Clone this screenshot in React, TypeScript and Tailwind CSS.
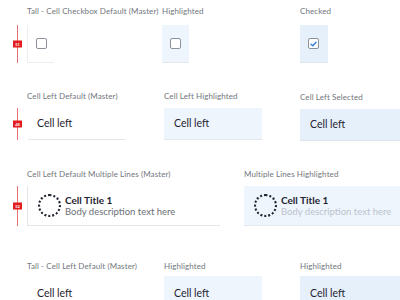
import React from 'react';

function Marker({ label }: { label: string }) {
  // red measurement guide on the left of master cells
  return (
    <div className="absolute left-[17px] top-0 bottom-0 w-px bg-[#e57373]">
      <div className="absolute left-[-4px] top-1/2 -translate-y-1/2 w-[9px] h-[7px] bg-[#e11d1d] text-white text-[4px] leading-[7px] text-center font-bold">
        {label}
      </div>
    </div>
  );
}

function Label({ children }: { children: React.ReactNode }) {
  return <div className="text-[8px] leading-[10px] tracking-[0.1px] text-[#72767d] whitespace-nowrap">{children}</div>;
}

function Checkbox({ checked }: { checked?: boolean }) {
  return (
    <div className="w-[11px] h-[11px] rounded-[2px] border-[1.5px] border-[#8d929a] bg-white flex items-center justify-center">
      {checked && (
        <svg width="7" height="6" viewBox="0 0 7 6" fill="none">
          <path d="M1 3.2 L2.8 4.8 L6 1.2" stroke="#2f7fd6" strokeWidth="1.4" strokeLinecap="round" strokeLinejoin="round" />
        </svg>
      )}
    </div>
  );
}

function Circle() {
  return <div className="w-[23px] h-[23px] rounded-full border-2 border-dotted border-[#1f2430] shrink-0" />;
}

export default function App() {
  return (
    <div className="w-[400px] h-[300px] overflow-hidden bg-white font-['Lato','Open_Sans',sans-serif]">
      {/* Row 1: tall checkbox */}
      <div className="flex pl-[27px] pt-[6px]">
        <div className="w-[135px] flex flex-col gap-[9px]">
          <Label>Tall - Cell Checkbox Default (Master)</Label>
          <div className="relative -ml-[27px] pl-[27px]">
            <Marker label="51" />
            <div className="w-[27px] h-[38px] border-l border-b border-[#eceef1] flex items-center pl-[8px]">
              <Checkbox />
            </div>
          </div>
        </div>
        <div className="w-[138px] flex flex-col gap-[9px]">
          <Label>Highlighted</Label>
          <div className="w-[27px] h-[38px] bg-[#eef5fd] border-b border-[#e3e8ee] flex items-center pl-[8px]">
            <Checkbox />
          </div>
        </div>
        <div className="flex flex-col gap-[9px]">
          <Label>Checked</Label>
          <div className="w-[28px] h-[38px] bg-[#e6f0fb] border-b border-[#dfe5ec] flex items-center pl-[8px]">
            <Checkbox checked />
          </div>
        </div>
      </div>

      {/* Row 2: cell left */}
      <div className="flex pl-[27px] mt-[28px]">
        <div className="w-[137px] flex flex-col gap-[7px]">
          <Label>Cell Left Default (Master)</Label>
          <div className="relative -ml-[27px] pl-[28px]">
            <Marker label="48" />
            <div className="w-[97px] h-[32px] border-b border-[#e3e6ea] flex items-center pl-[9px] text-[10.5px] text-[#1f2430]">
              Cell left
            </div>
          </div>
        </div>
        <div className="w-[136px] flex flex-col gap-[7px]">
          <Label>Cell Left Highlighted</Label>
          <div className="w-[98px] h-[32px] bg-[#eef5fd] border-b border-[#e3e8ee] flex items-center pl-[10px] text-[10.5px] text-[#1f2430]">
            Cell left
          </div>
        </div>
        <div className="flex-1 flex flex-col gap-[7px] pt-[1px]">
          <Label>Cell Left Selected</Label>
          <div className="h-[32px] bg-[#e6f0fb] border-b border-[#dfe5ec] flex items-center pl-[10px] text-[10.5px] text-[#1f2430]">
            Cell left
          </div>
        </div>
      </div>

      {/* Row 3: multiple lines */}
      <div className="flex pl-[27px] mt-[28px]">
        <div className="w-[217px] flex flex-col gap-[7px]">
          <Label>Cell Left Default Multiple Lines (Master)</Label>
          <div className="relative -ml-[27px] pl-[27px]">
            <Marker label="52" />
            <div className="w-[193px] h-[40px] border-l border-b border-[#e3e6ea] flex items-center gap-[4px] pl-[10px]">
              <Circle />
              <div className="flex flex-col">
                <span className="text-[10px] leading-[12px] font-bold text-[#1f2430]">Cell Title 1</span>
                <span className="text-[9.5px] leading-[12px] text-[#6b6f76]">Body description text here</span>
              </div>
            </div>
          </div>
        </div>
        <div className="flex-1 flex flex-col gap-[7px]">
          <Label>Multiple Lines Highlighted</Label>
          <div className="h-[40px] bg-[#eef5fd] border-b border-[#e3e8ee] flex items-center gap-[4px] pl-[10px]">
            <Circle />
            <div className="flex flex-col">
              <span className="text-[10px] leading-[12px] font-bold text-[#1f2430]">Cell Title 1</span>
              <span className="text-[9.5px] leading-[12px] text-[#bcc3cc]">Body description text here</span>
            </div>
          </div>
        </div>
      </div>

      {/* Row 4: tall cell left */}
      <div className="flex pl-[27px] mt-[35px]">
        <div className="w-[137px] flex flex-col gap-[5px]">
          <Label>Tall - Cell Left Default (Master)</Label>
          <div className="w-[98px] h-[40px] flex items-start pt-[11px] pl-[10px] text-[10.5px] leading-[12px] text-[#1f2430]">
            Cell left
          </div>
        </div>
        <div className="w-[136px] flex flex-col gap-[5px]">
          <Label>Highlighted</Label>
          <div className="w-[98px] h-[40px] bg-[#eef5fd] flex items-start pt-[11px] pl-[10px] text-[10.5px] leading-[12px] text-[#1f2430]">
            Cell left
          </div>
        </div>
        <div className="flex-1 flex flex-col gap-[5px]">
          <Label>Highlighted</Label>
          <div className="h-[40px] bg-[#e6f0fb] flex items-start pt-[11px] pl-[10px] text-[10.5px] leading-[12px] text-[#1f2430]">
            Cell left
          </div>
        </div>
      </div>
    </div>
  );
}
